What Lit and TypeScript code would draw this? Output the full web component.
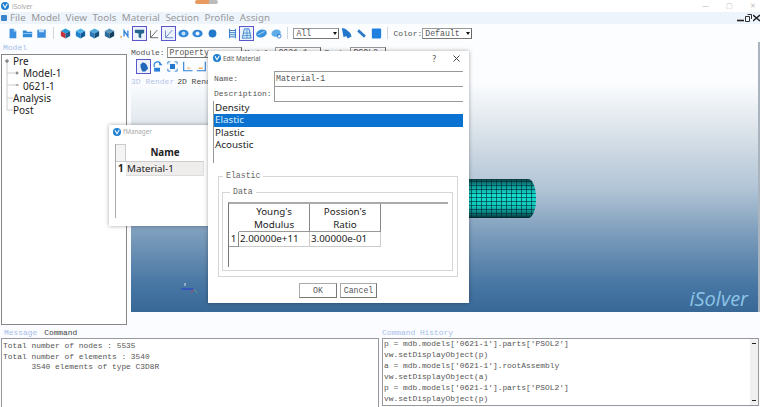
import { LitElement, html, css, svg } from "lit";
import { customElement } from "lit/decorators.js";

const logo = html`<svg class="logo" viewBox="0 0 12 12"><circle cx="6" cy="6" r="6" fill="#1f7fd0"/><path d="M3 3.5 6 8.5 9.5 2.5" fill="none" stroke="#fff" stroke-width="1.6"/></svg>`;

const cube = (top: string, left: string, right: string) => svg`
	<path d="M6.5 .5 12 3.5 6.5 6.5 1 3.5z" fill=${top}/>
	<path d="M1 3.5 6.5 6.5V12.5L1 9.5z" fill=${left}/>
	<path d="M12 3.5 6.5 6.5V12.5L12 9.5z" fill=${right}/>`;

const doc = svg`<path d="M3 1H8L11 4V12H3z" fill="#3b8fe0"/><path d="M8 1V4H11" fill="#bfe0fa"/>`;
const folder = svg`<path d="M1 3H5L6 4.5H12V11H1z" fill="#2f8ad8"/><path d="M1 6.5H12" stroke="#9ccff5"/>`;
const disk = svg`<path d="M1.5 2H11.5V11.5H1.5z" fill="#3b8cdc"/><path d="M3.5 2H9.5V5H3.5z" fill="#bfe0fa"/>`;
const nIcon = svg`<path d="M6 10V3L10.5 10V3" fill="none" stroke="#2a7fd6" stroke-width="1.5"/><circle cx="2.5" cy="10.5" r="1.1" fill="#ed9b4d"/>`;
const shade = svg`<path d="M1 2H12V6L8.5 7V12L5.5 11V6.5L1 5.5z" fill="#24648f"/>`;
const axes = (c: string) => svg`<path d="M3 11.5H12M3 11.5 11 2.5M3 11.5V3" fill="none" stroke=${c} stroke-width="1"/>`;
const eye = (inner: string) => svg`<ellipse cx="6.5" cy="6.5" rx="6" ry="4.4" fill="#2f86d8"/><circle cx="6.5" cy="6.5" r="2.4" fill=${inner}/>`;
const dot = svg`<circle cx="6.5" cy="6.5" r="4.6" fill="#2478cc"/>`;
const rows = svg`<path d="M3 1V12M10 1V12M3 3H10M3 5.5H10M3 8H10M3 10.5H10" stroke="#2a78c8" stroke-width="1.1"/>`;
const mesh = svg`<path d="M4 1H9.5L12 12H1.5z" fill="#d8ebfb" stroke="#2a78c8"/><path d="M3 6H11M2.5 9H11.5M7 1.5V11.5" stroke="#2a78c8" stroke-width=".8"/>`;
const disc = svg`<ellipse cx="6.5" cy="6.5" rx="6.4" ry="4.6" fill="#3a92de" transform="rotate(-18 6.5 6.5)"/><path d="M2.5 8 10 4" stroke="#bfe0fa"/>`;
const disc2 = svg`<ellipse cx="6" cy="6" rx="5.6" ry="4.2" fill="#60aee8" transform="rotate(-18 6 6)"/><circle cx="9.5" cy="9.5" r="2.4" fill="none" stroke="#2a78c8"/>`;
const arrow = svg`<path d="M1 0 5 1 11 6 12.5 10 8 12.5 6 9.5 3 11z" fill="#2478cc"/>`;
const pencil = svg`<path d="M3.5 1.5 11.5 9 9.5 11.5 1.5 4z" fill="#2a78c8"/>`;
const box = svg`<rect x="1" y=".5" width="11" height="12" rx="1.2" fill="#1f80e0"/>`;
const hand = svg`<path d="M3 7V3.5L4.5 3 5.5 1.5 7 2 8 2.5 9.5 3.4 10.5 5 12 9 8.5 12.5H5z" fill="#2268b8"/>`;
const rotate = svg`<path d="M3 7A4 4 0 0 1 10 3" fill="none" stroke="#2a7fd6" stroke-width="1.4"/><path d="M8.5 .5V5H12.5z" fill="#2a7fd6"/><rect x="2.5" y="8" width="7" height="4.5" fill="#2a7fd6"/>`;
const fit = svg`<rect x="3.5" y="3.5" width="6" height="6" fill="#2478cc"/><path d="M1 4V1H4M9 1H12V4M12 9V12H9M4 12H1V9" fill="none" stroke="#2478cc"/>`;
const corner = (c: string) => svg`<path d="M2 1V11.5H12.5" fill="none" stroke="#2a7fd6" stroke-width="1.3"/><path d="M6 8.5H10" stroke=${c}/>`;
const cornerR = svg`<path d="M11 1V11.5H1" fill="none" stroke="#2a7fd6" stroke-width="1.3"/><path d="M3 8.5H8" stroke="#f0a040" stroke-width="1.4"/>`;

const tool = (icon: unknown, on = false) => html`<span class="tool ${on ? "on" : ""}"><svg viewBox="0 0 13 13">${icon}</svg></span>`;
const combo = (text: string, cls: string) => html`<span class="combo ${cls}"><span>${text}</span><i></i></span>`;

@customElement("app-root")
export class AppRoot extends LitElement
{
	static styles = css`
		:host {
			display: block;
			position: relative;
			width: 760px;
			height: 407px;
			overflow: hidden;
			background: #fafcff;
			font-family: "Noto Sans", sans-serif;
			font-size: 9.8px;
			color: #222;
		}
		.app { display: flex; flex-direction: column; height: 407px; }
		.mono { font-family: "Liberation Mono", monospace; font-size: 7.9px; }

		.title { flex: 0 0 12px; display: flex; align-items: center; gap: 3px; padding-left: 1px; background: #fff; color: #a5a5a5; font-size: 6.5px; position: relative; }
		.title .logo { width: 8px; height: 8px; }
		.pill { position: absolute; left: 195px; top: 0; width: 23px; height: 4px; border-radius: 2px; background: linear-gradient(90deg, #e89a60 60%, #bbb 60%); }
		.winbtns { margin-left: auto; display: flex; gap: 17px; margin-right: 4px; color: #c0c0c0; font-size: 7px; line-height: 12px; }

		.menu { flex: 0 0 12px; display: flex; align-items: center; padding-left: 1px; background: #edf4fc; color: #999; line-height: 12px; position: relative; }
		.menu .app-ico { width: 6px; height: 6px; background: #3a84cc; margin-right: 3px; border-radius: 1px; }
		.menu span { margin-right: 5.5px; }
		.mdi { position: absolute; right: 0; top: 2px; display: flex; gap: 1px; }
		.mdi svg { width: 7px; height: 8px; }

		.toolbar { flex: 0 0 18px; display: flex; align-items: center; padding-left: 6px; background: #fbfdff; }
		.tool { flex: 0 0 13px; height: 13px; margin-right: 1.7px; display: flex; align-items: center; justify-content: center; box-sizing: border-box; }
		.tool svg { display: block; width: 11px; height: 11px; }
		.tool.on { outline: 1px solid #5a55c8; background: #eef3fb; }
		.sep { width: 1px; height: 12px; background: #cfd6dd; margin: 0 5px 0 3px; flex: none; }
		.gap { width: 5px; flex: none; }

		.combo { display: inline-flex; align-items: center; justify-content: space-between; box-sizing: border-box; height: 11px; border: 1px solid #999; border-right-color: #666; border-bottom-color: #777; background: #fff; font-family: "Liberation Mono", monospace; font-size: 8.2px; color: #555; padding: 0 1px 0 2px; overflow: hidden; flex: none; }
		.combo i { width: 0; height: 0; border: 2.5px solid transparent; border-top: 3px solid #111; border-bottom: 0; }
		.c-all { width: 46px; margin-right: 1px; }
		.c-color { width: 50px; }
		.c-module { width: 75px; margin-right: 3px; }
		.c-model { width: 46px; margin-right: 3px; }
		.c-part { width: 36px; }
		.lab { font-family: "Liberation Mono", monospace; font-size: 8px; color: #555; flex: none; }

		.main { flex: 1; display: flex; min-height: 0; }
		.left { flex: 0 0 131px; display: flex; flex-direction: column; }
		.left .cap { height: 12px; line-height: 12px; padding-left: 3px; font-family: "Liberation Mono", monospace; font-size: 8px; color: #a9bde8; }
		.tree { height: 271px; margin-left: 1px; width: 126px; box-sizing: border-box; border: 1px solid #888; background: #fff; font-size: 10px; line-height: 12.3px; position: relative; }
		.tree div { padding-left: 11px; }
		.tree div.sub { padding-left: 21px; }
		.branches { position: absolute; left: 0; top: 0; width: 24px; height: 60px; }

		.canvas { flex: 1; height: 270px; position: relative; background: linear-gradient(#fbfdff 0 15%, #dbe3ea 33%, #b0c3d5 55%, #7f9fbd 70%, #4776a3 90%, #386896 100%); border-right: 2px solid #a9b4bf; box-sizing: border-box; }
		.modrow { display: flex; align-items: center; height: 13px; margin-top: 2px; padding-top: 2px; }
		.modrow .lab { margin-right: 2px; }
		.tools2 { display: flex; align-items: center; padding-left: 5.5px; margin-top: 0; height: 15px; }
		.tabs3 { font-family: "Liberation Mono", monospace; font-size: 8px; display: flex; gap: 3px; margin-top: 3px; }
		.tabs3 .off { color: #b4c4e8; }
		.tabs3 .cur { color: #444; }

		.pipe { position: absolute; left: 250px; top: 137px; width: 155px; height: 39px; border-radius: 0 8px 8px 0 / 0 18px 18px 0; overflow: hidden; background: linear-gradient(#0b3c40, #0e8c8c 14%, #13e0cf 42%, #10c8bc 70%, #0b6e70 90%, #07282c); }
		.pipe::after { content: ""; position: absolute; inset: 0; background: repeating-linear-gradient(90deg, rgba(0,40,50,.6) 0 1px, transparent 1px 5px), repeating-linear-gradient(0deg, rgba(0,40,50,.6) 0 1px, transparent 1px 4px); }
		.triad { position: absolute; left: 49px; top: 238px; width: 22px; height: 16px; }
		.brand { position: absolute; right: 10px; bottom: 0; font-family: "Open Sans", sans-serif; font-style: italic; font-size: 20px; line-height: 26px; color: #8cc4e8; }

		.bottom { flex: 0 0 80px; display: flex; }
		.pane { display: flex; flex-direction: column; box-sizing: border-box; }
		.pane.l { width: 382px; padding-left: 1px; padding-right: 3px; }
		.pane.r { flex: 1; padding-right: 1px; }
		.ptabs { height: 11px; line-height: 12px; padding-left: 3px; display: flex; gap: 7px; }
		.pane.r .ptabs { padding-left: 0; }
		.off { color: #a9bde8; }
		.ptabs .cur { color: #444; }
		.output { flex: 1; border: 1px solid #999; border-bottom: 0; background: #fff; line-height: 10.5px; padding: 2px 2px 0 1px; white-space: pre; color: #555; position: relative; }
		.pane.r .output { border-bottom: 1px solid #999; margin-bottom: 1px; line-height: 10.9px; padding-top: 0; }
		.sbar { position: absolute; right: 0; top: 0; bottom: 0; width: 8px; background: #f0f0f0; display: flex; flex-direction: column; justify-content: space-between; align-items: center; padding: 4px 0; box-sizing: border-box; }
		.sbar i { width: 4px; height: 1px; background: #222; }

		.win { position: absolute; background: #fff; box-shadow: 0 0 4px rgba(0,0,0,.35); box-sizing: border-box; }
		.wtitle { display: flex; align-items: center; gap: 2px; color: #555; font-size: 6.3px; height: 14px; }
		.wtitle .logo { width: 8px; height: 8px; flex: none; }

		.manager { left: 109px; top: 125px; width: 101px; height: 101px; }
		.manager .wtitle { color: #aaa; height: 13px; margin-bottom: 6px; padding-left: 4px; }
		.mt { margin-left: 6px; display: grid; grid-template-columns: 10px 78px; grid-template-rows: 18px 14px 42px; border-left: 1px solid #aaa; }
		.mt b { text-align: center; font-weight: 700; line-height: 18px; color: #222; border-bottom: 1px solid #ccc; }
		.mt .corner { border: 1px solid #ccc; border-left: 0; background: #f4f4f4; }
		.mt .n { font-weight: 700; line-height: 14px; padding-left: 2px; }
		.mt .v { background: #efedeb; line-height: 14px; padding-left: 1px; border-right: 1px solid #ddd; border-bottom: 1px solid #ddd; }

		.edit { left: 208px; top: 51px; width: 261px; height: 252px; display: flex; flex-direction: column; padding: 0 6px 0 5px; }
		.edit .wtitle { height: 14px; margin-bottom: 6px; }
		.wbtn { margin-left: auto; display: flex; gap: 17px; margin-right: 3px; font-size: 8px; color: #444; align-items: center; }
		.wbtn svg { width: 7px; height: 7px; }
		.frow { display: flex; height: 15px; align-items: center; }
		.frow .lab { width: 60px; margin-left: 1px; }
		.frow .in { flex: 1; height: 15px; box-sizing: border-box; border-top: 1px solid #999; border-left: 1px solid #999; font-family: "Liberation Mono", monospace; font-size: 8.2px; line-height: 13px; padding-left: 1px; color: #555; }
		.frow.last .in { height: 16px; border-bottom: 1px solid #999; }
		.list { height: 62px; border-left: 1px solid #999; line-height: 12.3px; padding-top: 1px; box-sizing: border-box; }
		.list div { padding-left: 1px; }
		.list .sel { background: #0a72d0; color: #dcefff; }

		fieldset { margin: 0; padding: 0; border: 1px solid #d6d6d6; min-width: 0; }
		legend { font-family: "Liberation Mono", monospace; font-size: 8.2px; color: #666; line-height: 10px; padding: 0 3px; margin-left: 1px; }
		.g1 { margin: 8px 5px 0 5px; height: 106px; box-sizing: border-box; padding: 0 4px 0 3px; }
		.g2 { height: 84px; box-sizing: border-box; padding: 0 0 0 5px; margin-top: 6px; }
		.g2 legend { margin-left: 2px; }
		.dt { margin-top: 5px; margin-right: 4px; height: 63px; border-left: 1px solid #777; border-top: 2px solid #aaa; display: grid; grid-template-columns: 10px 71px 71px; grid-template-rows: 28px 15px; align-content: start; }
		.dt .h { text-align: center; line-height: 13px; padding-top: 1px; border-right: 1px solid #888; border-bottom: 1px solid #999; color: #222; }
		.dt .blank { border-bottom: 0; border-right: 0; padding: 0; }
		.dt .rn { text-align: center; line-height: 14px; border-right: 1px solid #888; border-bottom: 1px solid #999; }
		.dt .c { line-height: 14px; padding-left: 1px; border-right: 1px solid #ccc; border-bottom: 1px solid #ccc; }
		.btns { display: flex; margin: 6px 0 0 86px; gap: 3px; }
		.btn { box-sizing: border-box; height: 15px; font-family: "Liberation Mono", monospace; font-size: 8.2px; line-height: 14px; text-align: center; color: #555; border: 1px solid #aaa; border-right-color: #777; border-bottom-color: #777; }
		.btn.ok { width: 38px; }
		.btn.cancel { width: 37px; }
	`;

	render()
	{
		return html`
			<div class="app">
				<div class="title">${logo}<span>iSolver</span><span class="pill"></span>
					<span class="winbtns"><span>—</span><span>▢</span><span>✕</span></span>
				</div>
				<div class="menu">
					<i class="app-ico"></i>
					${["File", "Model", "View", "Tools", "Material", "Section", "Profile", "Assign"].map(m => html`<span>${m}</span>`)}
					<div class="mdi">
						<svg viewBox="0 0 7 8"><path d="M0 6.5H7" stroke="#222" stroke-width="1.6"/></svg>
						<svg viewBox="0 0 7 8"><path d="M2.5 .5H6.5V5M.5 2.5H4.5V7.5H.5z" fill="none" stroke="#333"/></svg>
						<svg viewBox="0 0 7 8"><path d="M0 1 7 7M7 1 0 7" stroke="#222" stroke-width="1.4"/></svg>
					</div>
				</div>
				<div class="toolbar">
					${tool(doc)}${tool(folder)}${tool(disk)}<span class="sep"></span>
					${tool(cube("#2a9ad8", "#c8323a", "#1d5c8c"))}${tool(cube("#4fb4ec", "#1f82cc", "#0f5c9c"))}
					${tool(cube("#50a8dc", "#2a78b8", "#14507e"))}${tool(cube("#5a98c0", "#2c6c9c", "#143f5f"))}
					${tool(nIcon)}${tool(shade, true)}${tool(axes("#555"))}${tool(axes("#5a7cc8"), true)}
					${tool(eye("#bfe0fa"))}${tool(eye("#e8f3fc"))}${tool(dot)}<span class="gap"></span>
					${tool(rows)}${tool(mesh, true)}${tool(disc)}${tool(disc2)}<span class="sep"></span>
					${combo("All", "c-all")}${tool(arrow)}${tool(pencil)}${tool(box)}<span class="sep"></span>
					<span class="lab">Color:</span>${combo("Default", "c-color")}
				</div>
				<div class="main">
					<div class="left">
						<div class="cap">Model</div>
						<div class="tree">
							<svg class="branches" viewBox="0 0 24 60"><path d="M5 6V55M5 43H11M5 55H11M5 18H13M5 30H13" stroke="#ccc" fill="none"/><path d="M3 6H7M5 4V8M13.5 18H16.5M15 16.5V19.5M13.5 30H16.5" stroke="#666" fill="none"/></svg>
							<div>Pre</div>
							<div class="sub">Model-1</div>
							<div class="sub">0621-1</div>
							<div>Analysis</div>
							<div>Post</div>
						</div>
					</div>
					<div class="canvas">
						<div class="modrow">
							<span class="lab">Module:</span>${combo("Property", "c-module")}
							<span class="lab">Model:</span>${combo("0621-1", "c-model")}
							<span class="lab">Part:</span>${combo("PSOL2", "c-part")}
						</div>
						<div class="tools2">
							${tool(hand, true)}${tool(rotate)}${tool(fit)}${tool(corner("#f0a040"))}${tool(cornerR)}
						</div>
						<div class="tabs3"><span class="off">3D Render</span><span class="cur">2D Render</span></div>
						<div class="pipe"></div>
						<svg class="triad" viewBox="0 0 22 16"><path d="M14 9H1" stroke="#2a44cc" stroke-width="1.2"/><path d="M5 6V3" stroke="#d8e4f0"/><path d="M14 9 11 13" stroke="#b04a6a"/><path d="M14 9 17 13" stroke="#5aa08a"/></svg>
						<div class="brand">iSolver</div>
					</div>
				</div>
				<div class="bottom mono">
					<div class="pane l">
						<div class="ptabs"><span class="off">Message</span><span class="cur">Command</span></div>
						<div class="output">Total number of nodes : 5535
Total number of elements : 3540
      3540 elements of type C3D8R</div>
					</div>
					<div class="pane r">
						<div class="ptabs off">Command History</div>
						<div class="output">p = mdb.models['0621-1'].parts['PSOL2']
vw.setDisplayObject(p)
a = mdb.models['0621-1'].rootAssembly
vw.setDisplayObject(a)
p = mdb.models['0621-1'].parts['PSOL2']
vw.setDisplayObject(p)<div class="sbar"><i></i><i></i></div></div>
					</div>
				</div>
			</div>

			<div class="win manager">
				<div class="wtitle">${logo}<span>fManager</span></div>
				<div class="mt">
					<span class="corner"></span><b>Name</b>
					<span class="n">1</span><span class="v">Material-1</span>
				</div>
			</div>

			<div class="win edit">
				<div class="wtitle">${logo}<span>Edit Material</span>
					<span class="wbtn"><span>?</span><svg viewBox="0 0 7 7"><path d="M.5 .5 6.5 6.5M6.5 .5 .5 6.5" stroke="#444"/></svg></span>
				</div>
				<div class="frow"><span class="lab">Name:</span><span class="in">Material-1</span></div>
				<div class="frow last"><span class="lab">Description:</span><span class="in"></span></div>
				<div class="list">
					<div>Density</div>
					<div class="sel">Elastic</div>
					<div>Plastic</div>
					<div>Acoustic</div>
				</div>
				<fieldset class="g1">
					<legend>Elastic</legend>
					<fieldset class="g2">
						<legend>Data</legend>
						<div class="dt">
							<span class="h blank"></span><span class="h">Young's<br>Modulus</span><span class="h">Possion's<br>Ratio</span>
							<span class="rn">1</span><span class="c">2.00000e+11</span><span class="c">3.00000e-01</span>
						</div>
					</fieldset>
				</fieldset>
				<div class="btns"><span class="btn ok">OK</span><span class="btn cancel">Cancel</span></div>
			</div>
		`;
	}
}
